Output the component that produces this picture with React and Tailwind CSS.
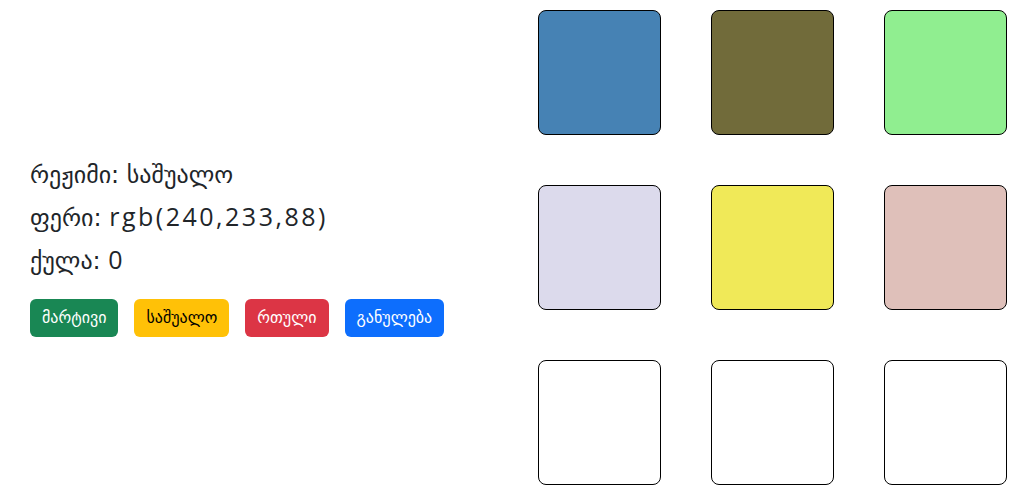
import React from 'react';

const colors = [
  '#4682b4', '#716b3a', '#90ee90',
  '#dcdaec', '#f0e958', '#dfc0ba',
  '#ffffff', '#ffffff', '#ffffff',
];

const buttons = [
  { label: 'მარტივი', cls: 'bg-[#198754] text-white' },
  { label: 'საშუალო', cls: 'bg-[#ffc107] text-black' },
  { label: 'რთული', cls: 'bg-[#dc3545] text-white' },
  { label: 'განულება', cls: 'bg-[#0d6efd] text-white' },
];

const App = () => {
  return (
    <div className="flex w-[1035px] h-[499px] bg-white text-[#212529] font-['DejaVu_Sans',sans-serif]">
      {/* Info + controls */}
      <div className="w-[538px] pl-[30px] pt-[155px]">
        <div className="text-[24px] leading-[41px]">
          <p>რეჟიმი: საშუალო</p>
          <p>ფერი: <span className="font-['Open_Sans',sans-serif] font-medium text-[25px] tracking-[2.5px]">rgb(240,233,88)</span></p>
          <p>ქულა: <span className="font-['Open_Sans',sans-serif] font-medium text-[25px]">0</span></p>
        </div>
        <div className="flex gap-4 mt-[17px]">
          {buttons.map(b => (
            <button key={b.label} className={`${b.cls} h-[38px] px-3 rounded-md text-[16px]`}>
              {b.label}
            </button>
          ))}
        </div>
      </div>

      {/* Color grid */}
      <div className="grid grid-cols-[123px_123px_123px] gap-x-[50px] gap-y-[50px] pt-[10px] content-start">
        {colors.map((c, i) => (
          <div
            key={i}
            className="w-[123px] h-[125px] rounded-lg border border-black"
            style={{ backgroundColor: c }}
          />
        ))}
      </div>
    </div>
  );
};

export default App;
